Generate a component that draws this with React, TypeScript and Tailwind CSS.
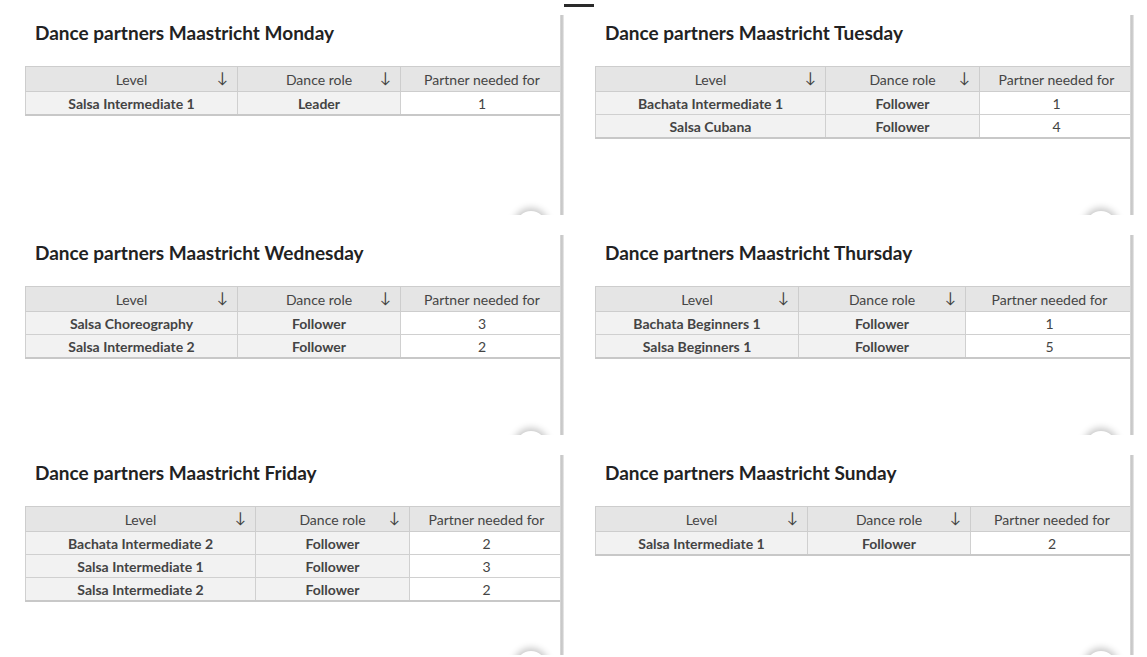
import React from "react";

type Row = [string, string, string];
type Panel = { day: string; widths: [number, number, number]; rows: Row[] };

const panels: Panel[] = [
  { day: "Monday", widths: [212, 163, 163], rows: [["Salsa Intermediate 1", "Leader", "1"]] },
  { day: "Tuesday", widths: [230, 154, 154], rows: [["Bachata Intermediate 1", "Follower", "1"], ["Salsa Cubana", "Follower", "4"]] },
  { day: "Wednesday", widths: [212, 163, 163], rows: [["Salsa Choreography", "Follower", "3"], ["Salsa Intermediate 2", "Follower", "2"]] },
  { day: "Thursday", widths: [203, 167, 168], rows: [["Bachata Beginners 1", "Follower", "1"], ["Salsa Beginners 1", "Follower", "5"]] },
  { day: "Friday", widths: [230, 154, 154], rows: [["Bachata Intermediate 2", "Follower", "2"], ["Salsa Intermediate 1", "Follower", "3"], ["Salsa Intermediate 2", "Follower", "2"]] },
  { day: "Sunday", widths: [212, 163, 163], rows: [["Salsa Intermediate 1", "Follower", "2"]] },
];

function SortHead({ label }: { label: string }) {
  return (
    <th className="border border-[#cdcdcd] font-normal p-0">
      <div className="grid grid-cols-[1fr_auto_1fr] items-center">
        <span />
        <span>{label}</span>
        <span className="justify-self-end pr-[9px] text-[15px] leading-none text-[#444] -mt-[3px]">↓</span>
      </div>
    </th>
  );
}

function Card({ p }: { p: Panel }) {
  return (
    <div className="relative w-[563px] h-[220px] bg-white">
      <h2 className="pl-[35px] pt-[20px] h-[66px] text-[19px] leading-[26px] font-bold text-[#222]">
        Dance partners Maastricht {p.day}
      </h2>
      <table className="ml-[25px] border-collapse table-fixed text-[14px] text-[#444]" style={{ width: 538 }}>
        <colgroup>
          <col style={{ width: p.widths[0] }} />
          <col style={{ width: p.widths[1] }} />
          <col style={{ width: p.widths[2] }} />
        </colgroup>
        <thead>
          <tr className="h-[25px] bg-[#e5e5e5] leading-[23px]">
            <SortHead label="Level" />
            <SortHead label="Dance role" />
            <th className="border border-[#cdcdcd] font-normal p-0">Partner needed for</th>
          </tr>
        </thead>
        <tbody>
          {p.rows.map((r, i) => (
            <tr key={i} className="h-[23px]">
              <td className="border border-[#d0d0d0] bg-[#f2f2f2] text-center font-bold text-[#444] p-0 pt-[1px]">{r[0]}</td>
              <td className="border border-[#d0d0d0] bg-[#f2f2f2] text-center font-bold text-[#444] p-0 pt-[1px]">{r[1]}</td>
              <td className="border border-[#d0d0d0] bg-white text-center p-0 pt-[1px]">{r[2]}</td>
            </tr>
          ))}
          <tr className="h-0">
            <td colSpan={3} className="p-0 border-t-2 border-[#c8c8c8]"></td>
          </tr>
        </tbody>
      </table>
      <div className="absolute right-[-1px] top-[15px] h-[200px] w-[4px] bg-gradient-to-r from-[#dcdcdc] via-[#c2c2c2] to-[#efefef]" />
      <div className="absolute right-[3px] top-[185px] h-[30px] w-[60px] overflow-hidden">
        <div className="absolute left-[16px] top-[26px] h-[30px] w-[30px] rounded-full bg-white shadow-[0_0_7px_3px_rgba(0,0,0,0.22)]" />
      </div>
    </div>
  );
}

export default function App() {
  return (
    <div className="relative w-[1147px] h-[657px] bg-white overflow-hidden" style={{ fontFamily: "Lato, 'Noto Sans', sans-serif" }}>
      <div className="grid grid-cols-[563px_563px] gap-x-[7px]">
        {panels.map((p) => (
          <Card key={p.day} p={p} />
        ))}
      </div>
      <div className="absolute z-10 left-[564px] top-[4px] h-[3px] w-[30px] bg-[#2a2a2a]" />
    </div>
  );
}
